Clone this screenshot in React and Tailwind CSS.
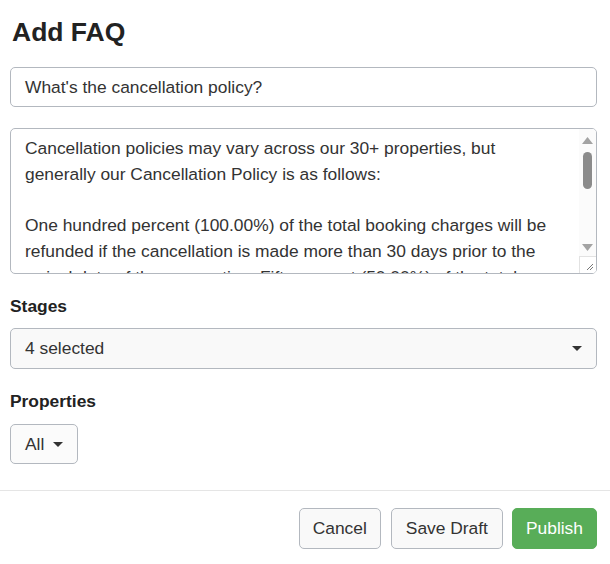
import React from 'react'

// Add FAQ modal body – question, answer, stages, properties, footer actions
const answer = `Cancellation policies may vary across our 30+ properties, but generally our Cancellation Policy is as follows:

One hundred percent (100.00%) of the total booking charges will be refunded if the cancellation is made more than 30 days prior to the arrival date of the reservation. Fifty percent (50.00%) of the total booking charges will be refunded if the cancellation is made between 14 and 30 days prior to the arrival date.`

function Caret({ className = '' }) {
  return (
    <svg className={className} width="10" height="5" viewBox="0 0 10 5">
      <path d="M0 0h10L5 5z" fill="#333" />
    </svg>
  )
}

function FakeScrollbar() {
  return (
    <div className="flex flex-col w-[17px] bg-[#fbfbfb]">
      <div className="h-[22px] flex items-center justify-center">
        <svg width="11" height="7" viewBox="0 0 11 7"><path d="M5.5 0L11 7H0z" fill="#a3a3a3" /></svg>
      </div>
      <div className="flex-1 flex justify-center pt-[1px]">
        <div className="w-[9px] h-[37px] rounded-full bg-[#8b8b8b]" />
      </div>
      <div className="h-[18px] flex items-center justify-center">
        <svg width="11" height="7" viewBox="0 0 11 7"><path d="M0 0h11L5.5 7z" fill="#a3a3a3" /></svg>
      </div>
      <div className="h-[17px] border-t border-l border-[#e2e2e2] bg-white flex items-end justify-end p-[2px]">
        <svg width="8" height="8" viewBox="0 0 8 8">
          <path d="M1 7L7 1M4 7L7 4" stroke="#777" strokeWidth="1" />
        </svg>
      </div>
    </div>
  )
}

export default function App() {
  return (
    <div className="w-[610px] h-[564px] bg-white text-[#333] text-[17.4px] font-['Liberation_Sans',Arial,sans-serif] overflow-hidden">
      <div className="pl-[10px] pr-[13px]">
        <h1 className="mt-[17px] pl-[2px] text-[26.5px] leading-[30px] font-bold text-[#222]">Add FAQ</h1>

        <div className="mt-[20px] h-[40px] flex items-center px-[14px] border border-[#b3b8bf] rounded-[5px] text-[#333]">
          What's the cancellation policy?
        </div>

        <div className="mt-[21px] h-[146px] flex border border-[#b3b8bf] rounded-[5px] overflow-hidden">
          <div className="flex-1 pl-[14px] pr-[14px] pt-[7px] leading-[25.7px] whitespace-pre-wrap overflow-hidden text-[#333]">
            {answer}
          </div>
          <FakeScrollbar />
        </div>

        <div className="mt-[21px] leading-[22px] font-bold text-[#222]">Stages</div>
        <div className="mt-[11px] h-[41px] flex items-center justify-between pl-[14px] pr-[14px] bg-[#f9f9f9] border border-[#b3b8bf] rounded-[5px]">
          <span>4 selected</span>
          <Caret />
        </div>

        <div className="mt-[21px] leading-[22px] font-bold text-[#222]">Properties</div>
        <button className="mt-[12px] h-[40px] flex items-center gap-[9px] px-[14px] bg-[#fbfbfb] border border-[#b3b8bf] rounded-[5px]">
          <span>All</span>
          <Caret />
        </button>
      </div>

      <div className="mt-[26px] border-t border-[#e5e5e5]" />

      <div className="pt-[17px] pr-[13px] flex justify-end">
        <button className="h-[41px] px-[13px] bg-[#f9f9f9] border border-[#b3b8bf] rounded-[5px] text-[#333]">Cancel</button>
        <button className="ml-[10px] h-[41px] px-[14px] bg-[#f9f9f9] border border-[#b3b8bf] rounded-[5px] text-[#333]">Save Draft</button>
        <button className="ml-[9px] h-[41px] px-[13px] bg-[#58ad58] border border-[#58ad58] rounded-[5px] text-white">Publish</button>
      </div>
    </div>
  )
}
